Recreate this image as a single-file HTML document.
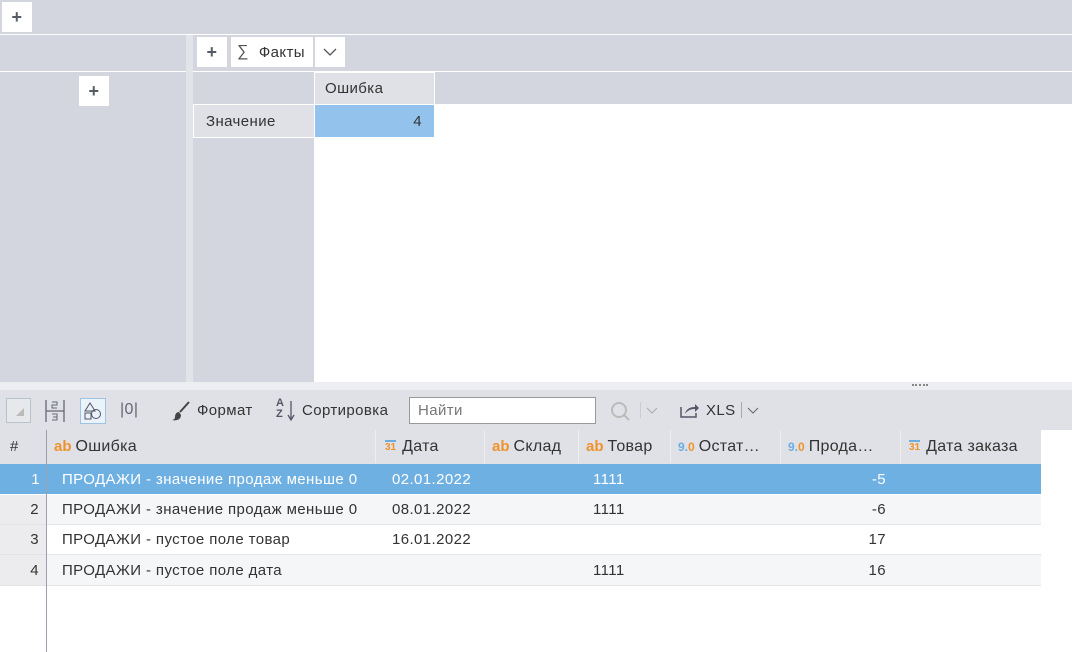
<!DOCTYPE html>
<html><head><meta charset="utf-8"><style>
*{box-sizing:border-box;margin:0;padding:0}
body{width:1072px;height:652px;position:relative;overflow:hidden;background:#fff;font-family:"Liberation Sans","DejaVu Sans",sans-serif;font-size:15px;letter-spacing:0.4px;color:#333}
.a{position:absolute}
.btn{position:absolute;background:#fff;display:flex;align-items:center;justify-content:center;font-size:18px;font-weight:bold;color:#555c66}
.cell{position:absolute;display:flex;align-items:center;white-space:nowrap}
.h{font-size:16px;letter-spacing:0.3px}
.ico{font-weight:bold;color:#f0922b;font-size:15px;margin-right:4px;letter-spacing:0}
.num{font-weight:bold;font-size:12px;margin-right:4px;letter-spacing:0}
</style></head><body>
<div class="a" style="left:0;top:0;width:1072px;height:34px;background:#d3d6de"></div>
<div class="btn" style="left:2px;top:2px;width:30px;height:30px">+</div>
<div class="a" style="left:0;top:35px;width:1072px;height:36px;background:#d3d6de"></div>
<div class="a" style="left:0;top:72px;width:186px;height:310px;background:#d3d6de"></div>
<div class="a" style="left:186px;top:35px;width:7px;height:347px;background:#e2e4e9"></div>
<div class="btn" style="left:197px;top:37px;width:30px;height:30px">+</div>
<div class="btn" style="left:231px;top:37px;width:82px;height:30px;font-weight:normal;font-size:15px;color:#333;justify-content:flex-start;padding-left:6px"><span style="font-size:16px;color:#555;margin-right:10px">∑</span>Факты</div>
<div class="btn" style="left:315px;top:37px;width:30px;height:30px;font-size:14px;font-weight:normal;color:#555">
<svg width="14" height="8"><path d="M1 1l6 6 6-6" stroke="#555" fill="none" stroke-width="1.3"/></svg></div>
<div class="btn" style="left:79px;top:76px;width:30px;height:30px">+</div>
<div class="a" style="left:193px;top:72px;width:879px;height:32px;background:#d3d6de"></div>
<div class="cell" style="left:314px;top:72px;width:121px;height:33px;background:#dfe1e6;padding-left:10px;border:1px solid #fff">Ошибка</div>
<div class="a" style="left:193px;top:104px;width:121px;height:278px;background:#d3d6de"></div>
<div class="cell" style="left:193px;top:104px;width:122px;height:34px;background:#dfe1e6;padding-left:12px;border:1px solid #fff">Значение</div>
<div class="cell" style="left:314px;top:104px;width:121px;height:34px;background:#93c3ec;justify-content:flex-end;padding-right:12px;border:1px solid #fff">4</div>
<div class="a" style="left:0;top:382px;width:1072px;height:8px;background:#eceef1"></div>
<div class="a" style="left:912px;top:384px;width:16px;height:2px;border-top:2px dotted #888"></div>
<div class="a" style="left:0;top:390px;width:1072px;height:40px;background:#dfe1e6"></div>
<div class="a" style="left:0;top:430px;width:1041px;height:34px;background:#dfe1e6"></div>
<div class="a" style="left:6px;top:398px;width:25px;height:25px;border:1px solid #b8c4cc;background:#e6e8ec"></div>
<svg class="a" style="left:12px;top:404px" width="14" height="14"><path d="M12 4v8h-8z" fill="#bbb"/></svg>
<svg class="a" style="left:44px;top:399px" width="22" height="24"><path d="M2 1v22M20 1v22M2 12h18" stroke="#667" stroke-width="1.3" fill="none"/><path d="M8 3h5v3h-5v3h5M8 15h5v3h-4M13 18v3h-5" stroke="#667" fill="none"/></svg>
<div class="a" style="left:80px;top:398px;width:26px;height:26px;border:1px solid #9fc3e0;background:#eaf2fa"></div>
<svg class="a" style="left:83px;top:401px" width="20" height="20"><path d="M7 2l5 8h-10z" stroke="#556" fill="none"/><rect x="2" y="12" width="6" height="6" stroke="#556" fill="none"/><circle cx="13" cy="13" r="4.5" stroke="#556" fill="none"/></svg>
<div class="a" style="left:120px;top:401px;color:#667;font-size:16px">|0|</div>
<svg class="a" style="left:171px;top:400px" width="20" height="22"><path d="M18 2l-9 10" stroke="#444" stroke-width="2"/><path d="M8 12c-3 0-4 3-4 5s-2 3-3 3c4 1 9 0 9-5z" fill="#444"/></svg>
<div class="a" style="left:197px;top:402px">Формат</div>
<div class="a" style="left:276px;top:398px;font-size:11px;line-height:11px;font-weight:bold;color:#556">A<br>Z</div>
<svg class="a" style="left:286px;top:400px" width="10" height="22"><path d="M5 1v18M2 15l3 5 3-5" stroke="#556" fill="none" stroke-width="1.3"/></svg>
<div class="a" style="left:302px;top:402px">Сортировка</div>
<div class="a" style="left:409px;top:397px;width:187px;height:27px;background:#fff;border:1px solid #999;padding:4px 8px;color:#777">Найти</div>
<svg class="a" style="left:610px;top:401px" width="22" height="20"><circle cx="9" cy="9" r="7" stroke="#bbb" stroke-width="2" fill="none"/><path d="M14 14l5 5" stroke="#bbb" stroke-width="2"/></svg>
<div class="a" style="left:640px;top:402px;width:1px;height:16px;background:#ccc"></div>
<svg class="a" style="left:646px;top:407px" width="12" height="7"><path d="M1 1l5 5 5-5" stroke="#aaa" fill="none"/></svg>
<svg class="a" style="left:680px;top:402px" width="20" height="16"><path d="M1 5v10h15v-4" stroke="#556" fill="none" stroke-width="1.5"/><path d="M5 12c1-5 5-7 10-7v-3l4 4-4 4v-3c-4 0-7 1-10 5z" fill="#556"/></svg>
<div class="a" style="left:706px;top:402px">XLS</div>
<div class="a" style="left:741px;top:402px;width:1px;height:16px;background:#aaa"></div>
<svg class="a" style="left:747px;top:407px" width="12" height="7"><path d="M1 1l5 5 5-5" stroke="#666" fill="none"/></svg>
<div class="cell" style="left:10px;top:430px;height:33px">#</div>
<div class="cell h" style="left:54px;top:430px;height:33px"><span class="ico">ab</span>Ошибка</div>
<div class="a" style="left:375px;top:430px;width:1px;height:33px;background:#eee"></div>
<div class="cell h" style="left:385px;top:430px;height:33px"><span class="num" style="color:#f0922b;border-top:2px solid #6aaee0;font-size:10px;margin-right:6px">31</span>Дата</div>
<div class="a" style="left:484px;top:430px;width:1px;height:33px;background:#eee"></div>
<div class="cell h" style="left:492px;top:430px;height:33px"><span class="ico">ab</span>Склад</div>
<div class="a" style="left:578px;top:430px;width:1px;height:33px;background:#eee"></div>
<div class="cell h" style="left:586px;top:430px;height:33px"><span class="ico">ab</span>Товар</div>
<div class="a" style="left:670px;top:430px;width:1px;height:33px;background:#eee"></div>
<div class="cell h" style="left:678px;top:430px;height:33px"><span class="num" style="color:#6aaee0">9.<span style="color:#f0922b">0</span></span>Остат…</div>
<div class="a" style="left:780px;top:430px;width:1px;height:33px;background:#eee"></div>
<div class="cell h" style="left:788px;top:430px;height:33px"><span class="num" style="color:#6aaee0">9.<span style="color:#f0922b">0</span></span>Прода…</div>
<div class="a" style="left:900px;top:430px;width:1px;height:33px;background:#eee"></div>
<div class="cell h" style="left:909px;top:430px;height:33px"><span class="num" style="color:#f0922b;border-top:2px solid #6aaee0;font-size:10px;margin-right:6px">31</span>Дата заказа</div>

<div class="a" style="left:0;top:464px;width:1041px;height:30px;background:#6fb0e3;color:#fff">
<div class="cell" style="left:0;width:40px;height:30px;justify-content:flex-end">1</div>
<div class="cell" style="left:62px;height:30px">ПРОДАЖИ - значение продаж меньше 0</div>
<div class="cell" style="left:392px;height:30px">02.01.2022</div>
<div class="cell" style="left:593px;height:30px">1111</div>
<div class="cell" style="left:780px;width:106px;height:30px;justify-content:flex-end">-5</div></div>

<div class="a" style="left:0;top:495px;width:1041px;height:30px;background:#f5f6f8;border-bottom:1px solid #e2e4e8">
<div class="cell" style="left:0;width:46px;height:29px;background:#ececef;justify-content:flex-end;padding-right:7px">2</div>
<div class="cell" style="left:62px;height:29px">ПРОДАЖИ - значение продаж меньше 0</div>
<div class="cell" style="left:392px;height:29px">08.01.2022</div>
<div class="cell" style="left:593px;height:29px">1111</div>
<div class="cell" style="left:780px;width:106px;height:29px;justify-content:flex-end">-6</div></div>

<div class="a" style="left:0;top:525px;width:1041px;height:30px;background:#fff;border-bottom:1px solid #e2e4e8">
<div class="cell" style="left:0;width:46px;height:29px;background:#ececef;justify-content:flex-end;padding-right:7px">3</div>
<div class="cell" style="left:62px;height:29px">ПРОДАЖИ - пустое поле товар</div>
<div class="cell" style="left:392px;height:29px">16.01.2022</div>
<div class="cell" style="left:780px;width:106px;height:29px;justify-content:flex-end">17</div></div>

<div class="a" style="left:0;top:555px;width:1041px;height:31px;background:#f5f6f8;border-bottom:1px solid #e2e4e8">
<div class="cell" style="left:0;width:46px;height:30px;background:#ececef;justify-content:flex-end;padding-right:7px">4</div>
<div class="cell" style="left:62px;height:30px">ПРОДАЖИ - пустое поле дата</div>
<div class="cell" style="left:593px;height:30px">1111</div>
<div class="cell" style="left:780px;width:106px;height:30px;justify-content:flex-end">16</div></div>
<div class="a" style="left:46px;top:430px;width:1px;height:222px;background:#9aa0ad"></div>
</body></html>
